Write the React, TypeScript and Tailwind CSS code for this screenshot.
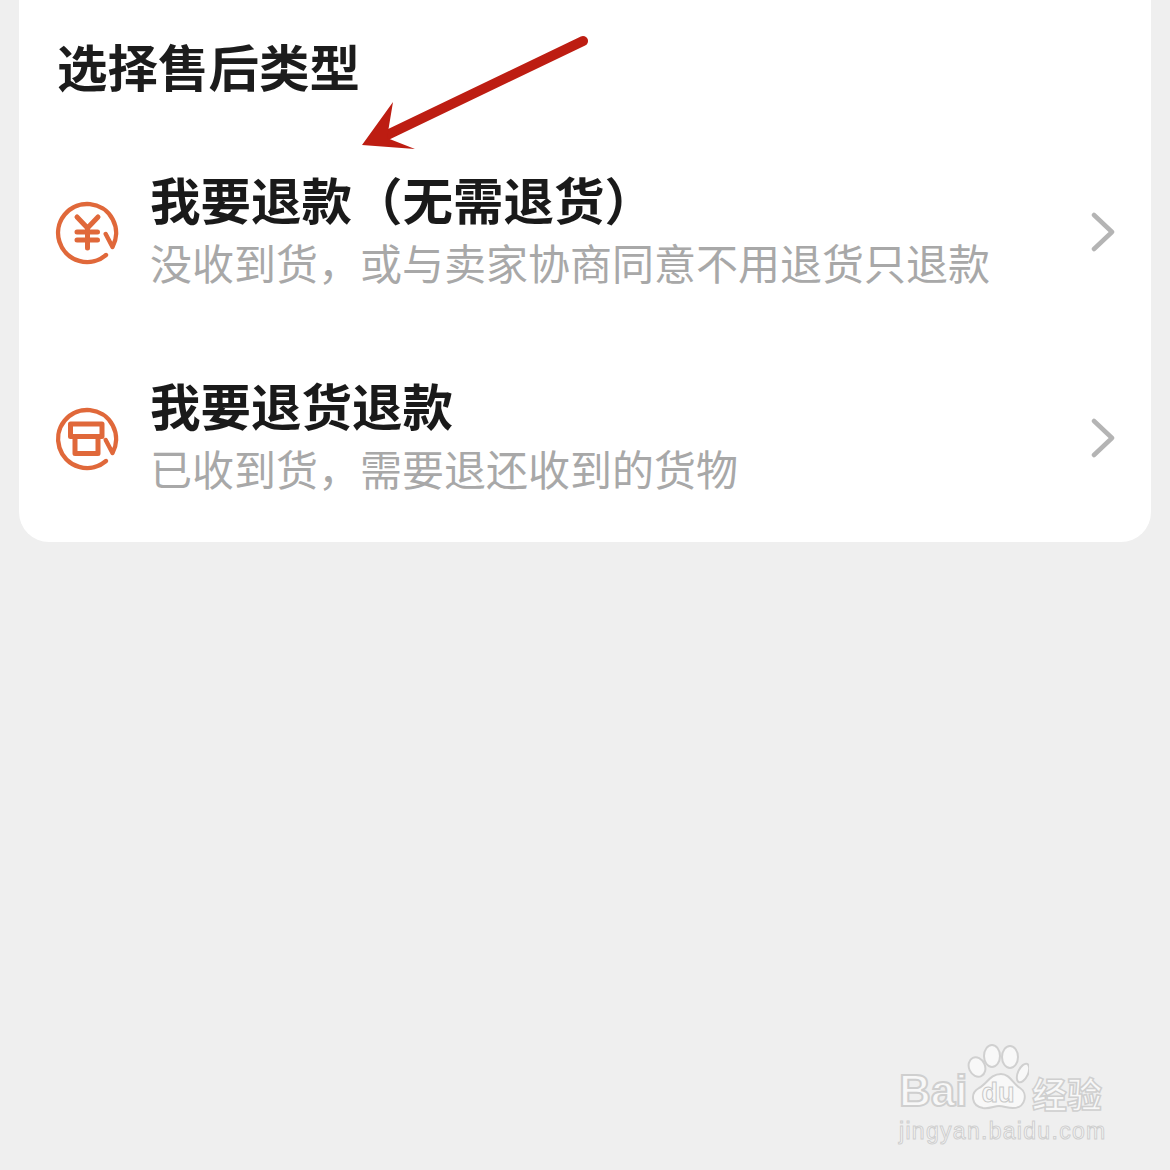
const ROWS = [
  {
    title: '我要退款\uFF08无需退货\uFF09',
    sub: '没收到货\uFF0C或与卖家协商同意不用退货只退款',
    kind: 'yen',
  },
  {
    title: '我要退货退款',
    sub: '已收到货\uFF0C需要退还收到的货物',
    kind: 'box',
  },
];

function RefundIcon({ kind }: { kind: string }) {
  return (
    <svg width="70" height="70" viewBox="0 0 70 70" fill="none" stroke="#e0683a" strokeLinecap="round" strokeLinejoin="round" className="shrink-0">
      <path d="M53.7 36L60.5 49A29 29 0 1 0 54 57" strokeWidth="4.4" />
      {kind === 'yen' ? (
        <path d="M25 19L35.5 30L46 19M25 34H45.5M25 42H45.5M35.5 30V50" strokeWidth="5" />
      ) : (
        <path d="M18.5 20H50V32.5H18.5ZM23 32.5V49.5H46V32.5" strokeWidth="5" />
      )}
    </svg>
  );
}

function Arrow() {
  return (
    <svg width="240" height="130" viewBox="0 0 240 130" className="absolute left-[355px] top-[30px]">
      <path d="M228 11L28 107" stroke="#bd1d12" strokeWidth="10" strokeLinecap="round" fill="none" />
      <path d="M7 115L38 72L32 108L60 119Z" fill="#bd1d12" />
    </svg>
  );
}

function Watermark() {
  return (
    <div className="absolute left-[899px] top-[1044px] flex flex-col font-['Liberation_Sans',sans-serif]">
      <div className="flex h-[70px] items-end">
        <span className="w-[68px] text-[44px] leading-[46px] font-bold text-[#f8f8f8] [-webkit-text-stroke:2px_#cfcfcf]">Bai</span>
        <div className="relative h-[70px] w-[62px]">
          <svg width="62" height="70" viewBox="0 0 62 70" fill="#f8f8f8" stroke="#d0d0d0" strokeWidth="2">
            <ellipse cx="10" cy="23" rx="8" ry="10" transform="rotate(-25 10 23)" />
            <ellipse cx="25" cy="12" rx="8" ry="11" />
            <ellipse cx="43" cy="13" rx="8" ry="11" />
            <ellipse cx="56" cy="29" rx="5" ry="10" transform="rotate(25 56 29)" />
            <path d="M34 30C43 30 46 40 53 44C61 49 59 64 46 64C40 64 37 62 32 62C27 62 23 65 16 64C4 62 3 49 12 44C20 40 23 30 34 30Z" />
          </svg>
          <span className="absolute inset-x-0 bottom-[6px] text-center text-[27px] leading-[30px] font-bold text-[#f8f8f8] [-webkit-text-stroke:1px_#c8c8c8]">du</span>
        </div>
        <span className="ml-[3px] font-['Noto_Sans_CJK_SC',sans-serif] text-[35px] leading-[42px] font-bold text-[#f8f8f8] [-webkit-text-stroke:1.5px_#cfcfcf]">经验</span>
      </div>
      <span className="mt-[3px] text-[23px] leading-[28px] tracking-[1.3px] text-[#f8f8f8] [-webkit-text-stroke:1px_#cfcfcf]">jingyan.baidu.com</span>
    </div>
  );
}

export default function App() {
  return (
    <div className="relative h-[1170px] w-[1170px] overflow-hidden bg-[#efefef] font-['Noto_Sans_CJK_SC',sans-serif]">
      <div className="mx-[19px] -mt-[30px] rounded-[30px] bg-white pt-[30px]">
        <div className="flex h-[130px] items-start pl-[38px] pt-[33px]">
          <h1 className="text-[50.5px] leading-[64px] font-bold text-[#1c1c1c]">选择售后类型</h1>
        </div>
        {ROWS.map((row) => (
          <div key={row.kind} className="flex h-[206px] items-center pl-[33px] pr-[35px]">
            <RefundIcon kind={row.kind} />
            <div className="ml-[28px] flex-1 pb-[7px]">
              <div className="text-[50.5px] leading-[62px] font-bold whitespace-nowrap text-[#1a1a1a]">{row.title}</div>
              <div className="mt-[3px] text-[42px] leading-[60px] whitespace-nowrap text-[#a8a8a8]">{row.sub}</div>
            </div>
            <svg width="26" height="40" viewBox="0 0 26 40" fill="none" stroke="#b4b4b4" strokeWidth="4.5" strokeLinecap="round" strokeLinejoin="round" className="mb-[3px] shrink-0">
              <path d="M4 3L22 20L4 37" />
            </svg>
          </div>
        ))}
      </div>
      <Arrow />
      <Watermark />
    </div>
  );
}
